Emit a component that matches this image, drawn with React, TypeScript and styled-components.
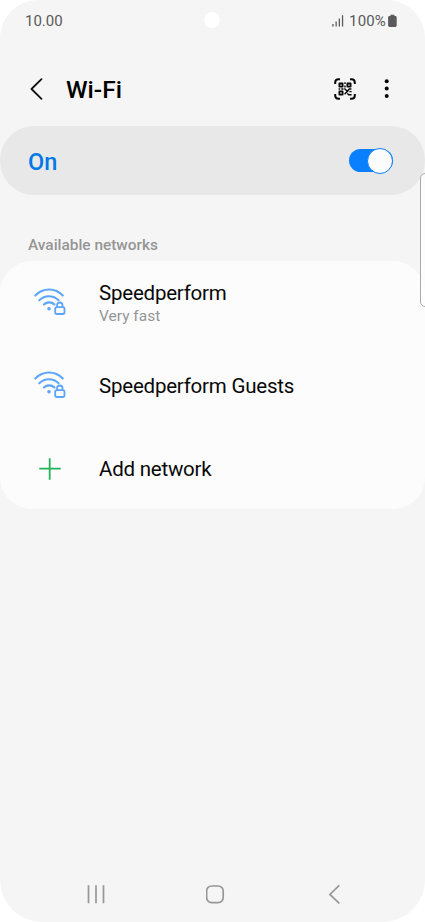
import React from "react";
import styled, { createGlobalStyle } from "styled-components";

const GlobalStyle = createGlobalStyle`
  * { box-sizing: border-box; }
  body { margin: 0; background: #fff; font-family: Roboto, "Noto Sans", sans-serif; }
`;

const Screen = styled.main`
  position: relative;
  display: flex;
  flex-direction: column;
  width: 425px;
  height: 922px;
  overflow: hidden;
  border-radius: 38px 38px 42px 42px;
  background: #f5f5f5;
`;

const StatusBar = styled.div`
  display: flex;
  align-items: center;
  justify-content: space-between;
  height: 42px;
  padding: 0 27px 0 25px;
  font-size: 15px;
  line-height: 18px;
  color: #5a5a5a;
`;

const StatusGroup = styled.div`
  display: flex;
  align-items: center;
`;

const BatteryText = styled.span`
  margin: 0 1px 0 5px;
  letter-spacing: 0.15px;
`;

const Camera = styled.div`
  position: absolute;
  top: 12px;
  left: 204px;
  width: 16px;
  height: 16px;
  border-radius: 50%;
  background: #fff;
`;

const Header = styled.header`
  display: flex;
  align-items: center;
  height: 84px;
  padding: 9px 29px 0 27px;
`;

const IconButton = styled.button<{ $width: number }>`
  display: flex;
  justify-content: center;
  width: ${(p) => p.$width}px;
  padding: 0;
  border: 0;
  background: none;
`;

const Title = styled.h1`
  flex: 1;
  margin: 2px 0 0 20px;
  font-size: 24.5px;
  line-height: 30px;
  font-weight: 500;
  color: #000;
`;

const SwitchCard = styled.section`
  display: flex;
  align-items: center;
  justify-content: space-between;
  height: 69px;
  padding: 0 32px 0 28px;
  border-radius: 34px;
  background: #e8e8e8;
`;

const SwitchLabel = styled.span`
  margin-top: 2px;
  font-size: 23.5px;
  line-height: 28px;
  font-weight: 500;
  color: #0078e6;
`;

const Toggle = styled.div`
  display: flex;
  align-items: center;
  justify-content: flex-end;
  width: 44px;
  height: 23px;
  border-radius: 12px;
  background: #0a80ff;
`;

const Knob = styled.div`
  flex: none;
  width: 26px;
  height: 26px;
  border: 1px solid #0a80ff;
  border-radius: 50%;
  background: #fcfcfc;
`;

const SectionLabel = styled.h2`
  margin: 40px 0 0 28px;
  height: 26px;
  font-size: 15.4px;
  line-height: 20px;
  font-weight: 500;
  color: #959595;
`;

const NetworkList = styled.section`
  height: 248px;
  border-radius: 32px;
  background: #fcfcfc;
`;

const Row = styled.div<{ $height: number }>`
  display: flex;
  align-items: center;
  height: ${(p) => p.$height}px;
`;

const RowIcon = styled.div`
  display: flex;
  justify-content: center;
  width: 99px;
`;

const RowText = styled.div`
  display: flex;
  flex-direction: column;
`;

const Name = styled.span`
  font-size: 20.5px;
  line-height: 26px;
  letter-spacing: -0.22px;
  color: #080808;
`;

const Detail = styled.span`
  font-size: 15.5px;
  line-height: 20px;
  color: #959595;
`;

const EdgeHandle = styled.div`
  position: absolute;
  top: 173px;
  right: -5px;
  width: 10px;
  height: 134px;
  border: 1px solid #aaa;
  border-radius: 5px;
  background: rgba(255, 255, 255, 0.65);
`;

const NavBar = styled.nav`
  display: grid;
  grid-template-columns: 120px 119px 20px;
  align-items: center;
  height: 56px;
  margin-top: auto;
  padding: 0 0 0 86px;
`;

const WifiLockIcon = () => (
  <svg width="34" height="30" viewBox="0 0 34 30" fill="none" stroke="#5ba5fb" strokeWidth="2.1" strokeLinecap="round">
    <path d="M2.3 7.4C10.2-.5 22-.5 29.8 7.4M6.3 12.2c5.5-5.3 13.8-5.3 19.3 0M10.9 16.5c3-2.8 7.6-2.8 10.6 0" />
    <circle cx="16" cy="20.8" r="1.8" fill="#5ba5fb" stroke="none" />
    <rect x="22.2" y="19.2" width="9.3" height="6.8" rx="1.7" strokeWidth="1.8" />
    <path d="M24.1 18.8v-1.6a2.7 2.7 0 0 1 5.4 0v1.6" strokeWidth="1.8" />
  </svg>
);

const QrIcon = () => (
  <svg width="22" height="22" viewBox="0 0 22 22" fill="none" stroke="#080808">
    <path d="M1.2 6V4.5q0-3.3 3.3-3.3H6M16 1.2h1.5q3.3 0 3.3 3.3V6M20.8 16v1.5q0 3.3-3.3 3.3H16M6 20.8H4.5q-3.3 0-3.3-3.3V16" strokeWidth="2" />
    <path d="M5.4 5.5h3.2v3.1H5.4zM13.4 5.5h3.2v3.1h-3.2zM5.4 13.4h3.2v3.2H5.4z" strokeWidth="1.8" strokeLinejoin="round" />
    <path d="M11 4.3V6M11 7.5v2M4.6 11h1.6M7.3 11h2.2M10.4 10.5l3.7 3.5M17.4 11h-2l-4.8 5.3M15.4 13.6h2.2M13.4 15.4l1.2 1.4h3" strokeWidth="1.4" />
  </svg>
);

const App = () => (
  <>
    <GlobalStyle />
    <Screen>
      <StatusBar>
        <span>10.00</span>
        <StatusGroup>
          <svg width="12" height="12" viewBox="0 0 12 12" fill="#5a5a5a">
            <path d="M.3 9h1.3v2.5H.3zM3.5 6.5h1.3v5H3.5zM6.7 3.5H8v8H6.7zM9.9.3h1.3v11.2H9.9z" />
          </svg>
          <BatteryText>100%</BatteryText>
          <svg width="11" height="14" viewBox="0 0 11 14" fill="#5a5a5a">
            <path d="M3.4.8h4V2h.8q1.5 0 1.5 1.4v8.2q0 1.4-1.5 1.4H2.6Q1.1 13 1.1 11.6V3.4Q1.1 2 2.6 2h.8z" />
          </svg>
        </StatusGroup>
      </StatusBar>
      <Header>
        <IconButton $width={19} aria-label="Back">
          <svg width="19" height="24" viewBox="0 0 19 24" fill="none" stroke="#111" strokeWidth="1.8" strokeLinecap="round" strokeLinejoin="round">
            <path d="M14.5 2.2 4.5 12l10 9.8" />
          </svg>
        </IconButton>
        <Title>Wi-Fi</Title>
        <IconButton $width={22} aria-label="Scan QR code"><QrIcon /></IconButton>
        <IconButton $width={40} aria-label="More options">
          <svg width="40" height="20" viewBox="0 0 40 20" fill="#050505">
            <circle cx="30.7" cy="2.3" r="2" /><circle cx="30.7" cy="9.6" r="2" /><circle cx="30.7" cy="17" r="2" />
          </svg>
        </IconButton>
      </Header>
      <SwitchCard>
        <SwitchLabel>On</SwitchLabel>
        <Toggle role="switch" aria-checked="true"><Knob /></Toggle>
      </SwitchCard>
      <SectionLabel>Available networks</SectionLabel>
      <NetworkList>
        <Row $height={84}>
          <RowIcon><WifiLockIcon /></RowIcon>
          <RowText><Name>Speedperform</Name><Detail>Very fast</Detail></RowText>
        </Row>
        <Row $height={82}>
          <RowIcon><WifiLockIcon /></RowIcon>
          <RowText><Name>Speedperform Guests</Name></RowText>
        </Row>
        <Row $height={83}>
          <RowIcon>
            <svg width="22" height="22" viewBox="0 0 22 22" fill="none" stroke="#20b459" strokeWidth="1.8">
              <path d="M10.7.3v21.4M.3 10.7h21.4" />
            </svg>
          </RowIcon>
          <RowText><Name>Add network</Name></RowText>
        </Row>
      </NetworkList>
      <NavBar>
        <svg width="20" height="20" viewBox="0 0 20 20" fill="none" stroke="#979797" strokeWidth="1.7">
          <path d="M2.5 1.3v18M10 1.3v18M17.5 1.3v18" />
        </svg>
        <svg width="20" height="20" viewBox="0 0 20 20" fill="none" stroke="#979797" strokeWidth="1.7">
          <rect x="0.6" y="2" width="16.6" height="16.6" rx="5" />
        </svg>
        <svg width="20" height="20" viewBox="0 0 20 20" fill="none" stroke="#979797" strokeWidth="1.7">
          <path d="M14.3 1.4 4.9 10.4l9.4 9" />
        </svg>
      </NavBar>
      <Camera />
      <EdgeHandle />
    </Screen>
  </>
);

export default App;
